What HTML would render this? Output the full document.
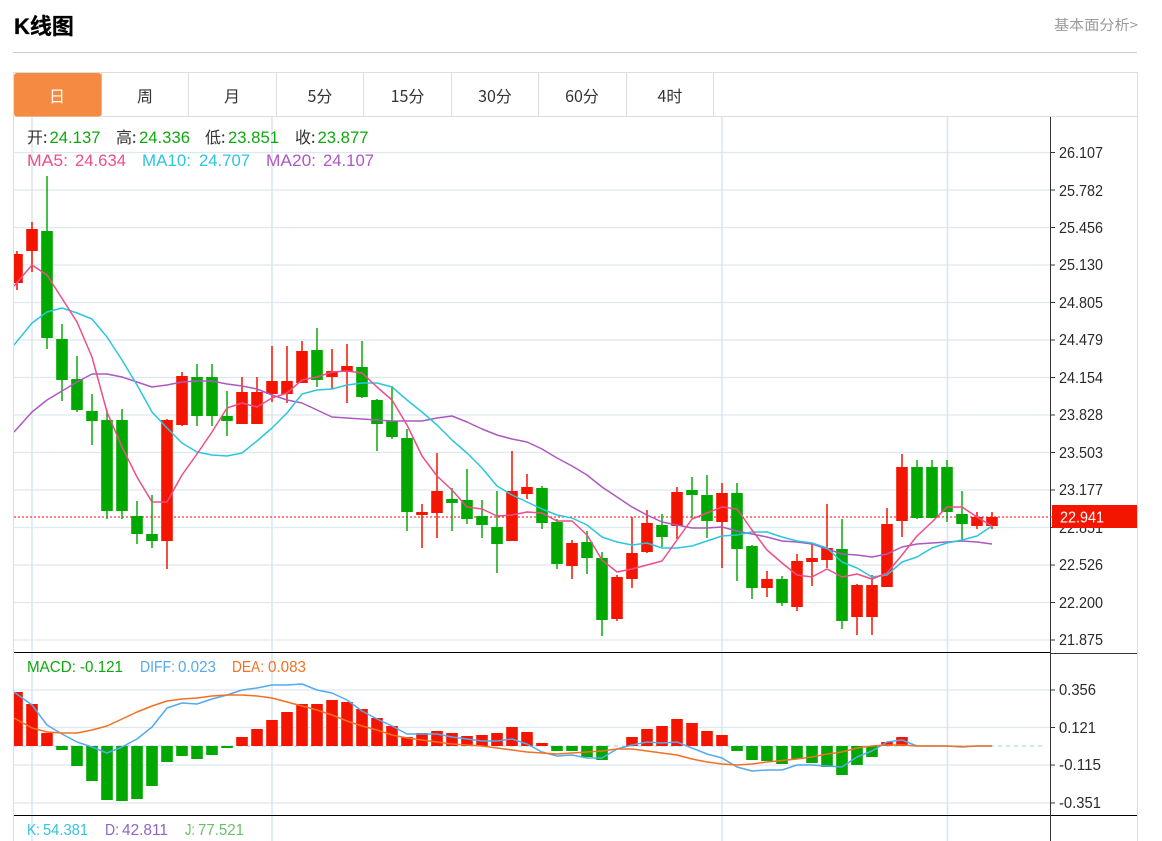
<!DOCTYPE html>
<html lang="zh-CN">
<head>
<meta charset="utf-8">
<title>K线图</title>
<style>
html,body{margin:0;padding:0;background:#fff;width:1162px;height:841px;overflow:hidden}
svg{display:block;position:absolute;left:0;top:0}
text{font-family:"Liberation Sans","Noto Sans CJK SC",sans-serif}
.n{font-size:16px;fill:#2a2a2a}
.t{font-size:16px;fill:#333;text-anchor:middle;font-family:"Noto Sans CJK SC","Liberation Sans",sans-serif}
.l{font-size:16px;fill:#333;font-family:"Noto Sans CJK SC","Liberation Sans",sans-serif}
.v{font-size:17px}
.s{font-size:16px}
</style>
</head>
<body>
<svg width="1162" height="841" viewBox="0 0 1162 841" xmlns="http://www.w3.org/2000/svg">
<defs><clipPath id="p"><rect x="14" y="117" width="1036" height="724"/></clipPath></defs>

<!-- header -->
<text x="14" y="34" font-size="22" font-weight="700" fill="#000" stroke="#000" stroke-width="0.3" style="font-family:'Liberation Sans','Noto Sans CJK SC',sans-serif">K线图</text>
<text x="1054" y="30" font-size="14" fill="#999" style="font-family:'Noto Sans CJK SC','Liberation Sans',sans-serif" textLength="84" lengthAdjust="spacingAndGlyphs">基本面分析&gt;</text>
<path d="M13 52.5H1137" stroke="#ccc" fill="none"/>

<!-- frame -->
<path d="M13.5 72.5H1137.5V841M13.5 72.5V841M14 116.5H1137" stroke="#ddd" fill="none"/>
<path d="M101.5 73V116M188.5 73V116M276.5 73V116M363.5 73V116M451.5 73V116M538.5 73V116M626.5 73V116M713.5 73V116" stroke="#ddd" fill="none"/>
<rect x="14" y="73" width="87.5" height="43.5" rx="3" fill="#f58b42"/>
<text class="t" x="57" y="102" style="fill:#fff">日</text>
<text class="t" x="145" y="102">周</text>
<text class="t" x="232" y="102">月</text>
<text class="t" x="320" y="102">5分</text>
<text class="t" x="407.500" y="102">15分</text>
<text class="t" x="495" y="102">30分</text>
<text class="t" x="582" y="102">60分</text>
<text class="t" x="670" y="102">4时</text>

<!-- grid -->
<path d="M14 152.500H1050M14 190H1050M14 227.500H1050M14 265H1050M14 302.500H1050M14 340H1050M14 377.500H1050M14 415H1050M14 452.500H1050M14 490H1050M14 527.500H1050M14 565H1050M14 602.500H1050M14 640H1050M14 690H1050M14 727.500H1050M14 765H1050M14 803H1050" stroke="#dde8ef" stroke-width="1.200" fill="none"/>
<path d="M32 117V841M272 117V841M722 117V841M947.500 117V841" stroke="#d8e5ee" stroke-width="1.500" fill="none"/>

<!-- current price line -->
<path d="M14 517H1050" stroke="#f00" stroke-width="1" stroke-dasharray="2 2" fill="none"/>
<!-- macd zero line -->
<path d="M14 746H1046" stroke="#8fd3f0" stroke-width="1" stroke-dasharray="4 4" fill="none"/>

<g clip-path="url(#p)" fill="none">
<!-- red wicks -->
<path stroke="#f41500" stroke-width="1.500" d="M17 251V290M32 222V272M167 419V569M182 372V426M242 377V424M257 377V424M272 346V402M287 346V403M302 341V383M332 349V389M347 344V403M422 504V548M437 453V538M512 451V541M527 474V499M572 540V579M617 575V621M632 517V588M647 510V553M677 487V539M722 483V568M767 571V597M797 554V611M812 544V586M827 504V568M857 584V635M872 575V635M887 508V587M902 454V537M977 512V529M992 512V529"/>
<!-- red bodies -->
<path stroke="#f41500" stroke-width="11.600" d="M17 254V283M32 229V251M167 420V541M182 376V425M242 392V424M257 392V424M272 381V394M287 381V394M302 351V383M332 371V377M347 366V372M422 512V515M437 491V513M512 491V541M527 487V494M572 543V566M617 577V619M632 553V579M647 523V552M677 492V526M722 493V522M767 579V588M797 561V607M812 558V562M827 548V560M857 585V617M872 585V617M887 524V587M902 467V521M977 517V526M992 517V526"/>
<!-- green wicks -->
<path stroke="#0da80d" stroke-width="1.500" d="M47 176V349M62 324V401M77 356V412M92 394V445M107 410V519M122 409V519M137 501V544M152 495V548M197 364V426M212 364V426M227 391V436M317 328V387M362 341V398M377 399V451M392 386V439M407 429V531M452 488V531M467 469V524M482 500V538M497 491V573M542 486V529M557 519V569M587 531V574M602 552V636M662 514V547M692 477V518M707 475V538M737 483V581M752 545V599M782 576V606M842 519V629M917 460V519M932 460V518M947 460V522M962 491V540"/>
<!-- green bodies -->
<path stroke="#00a800" stroke-width="11.600" d="M47 231V338M62 339V380M77 379V410M92 411V421M107 420V511M122 420V511M137 516V534M152 534V541M197 377V416M212 377V416M227 416V421M317 350V380M362 367V397M377 400V424M392 421V437M407 438V512M452 499V503M467 500V519M482 516V525M497 527V544M542 488V523M557 522V564M587 542V558M602 558V620M662 525V537M692 490V495M707 495V521M737 493V549M752 546V588M782 579V603M842 549V621M917 467V518M932 467V518M947 467V512M962 514V524"/>

<!-- MA lines -->
<polyline stroke="#ad58c1" stroke-width="1.500" stroke-linejoin="round" points="14,432 32,412 47,400 62,391 77,382 92,374 107,374 122,377 137,382 152,387 167,385 182,382 197,381 212,381 227,384 242,386 257,389 272,395 287,400 302,403 317,410 332,417 347,418 362,419 377,420 392,421 407,421 422,421 437,418 452,416 467,422 482,429 497,435 512,439 527,442 542,449 557,458 572,466 587,475 602,487 617,497 632,507 647,515 662,522 677,525 692,528 707,528 722,527 737,531 752,534 767,537 782,541 797,542 812,544 827,549 842,554 857,555 872,557 887,554 902,547 917,544 932,543 947,542 962,541 977,542 992,544"/>
<polyline stroke="#2cc6dc" stroke-width="1.500" stroke-linejoin="round" points="14,345 32,323 47,312 62,308 77,313 92,319 107,337 122,360 137,385 152,412 167,428 182,443 197,452 212,455 227,456 242,453 257,441 272,428 287,413 302,394 317,390 332,389 347,385 362,383 377,383 392,387 407,400 422,412 437,425 452,440 467,453 482,468 497,486 512,495 527,502 542,509 557,515 572,518 587,525 602,537 617,542 632,545 647,543 662,548 677,548 692,546 707,541 722,536 737,535 752,532 767,532 782,537 797,541 812,543 827,548 842,562 857,568 872,577 887,575 902,562 917,557 932,548 947,543 962,540 977,536 992,526"/>
<polyline stroke="#ee4d8a" stroke-width="1.500" stroke-linejoin="round" points="14,286 32,265 47,275 63,300 77,322 92,357 107,412 122,447 137,477 152,502 167,502 182,475 197,454 212,432 227,408 242,403 257,407 272,398 287,393 302,380 317,377 332,372 347,371 362,373 377,387 392,400 407,425 422,456 437,476 452,490 467,507 482,509 497,516 512,515 527,512 542,513 557,521 572,521 587,535 602,560 617,572 632,569 647,565 662,561 677,540 692,519 707,513 722,507 737,509 752,530 767,550 782,563 797,575 812,577 827,569 842,577 857,574 872,579 887,573 902,555 917,536 932,522 947,507 962,507 977,517 992,526"/>

<!-- MACD bars -->
<path stroke="#f41500" stroke-width="11.600" d="M17 692V746M32 704V746M47 733V746M242 737V746M257 729V746M272 720V746M287 712V746M302 704V746M317 704V746M332 700V746M347 702V746M362 709V746M377 718V746M392 726V746M407 737V746M422 733V746M437 731V746M452 733V746M467 736V746M482 735V746M497 733V746M512 727V746M527 732V746M542 743V746M632 737V746M647 729V746M662 726V746M677 719V746M692 723V746M707 731V746M722 735V746M887 742V746M902 737V746"/>
<path stroke="#00a800" stroke-width="11.600" d="M62 746V750M77 746V766M92 746V781M107 746V800M122 746V801M137 746V799M152 746V786M167 746V762M182 746V756M197 746V759M212 746V755M227 746V748M557 746V751M572 746V751M587 746V757M602 746V760M737 746V751M752 746V760M767 746V761M782 746V764M797 746V759M812 746V763M827 746V767M842 746V775M857 746V765M872 746V757"/>
<!-- DIFF -->
<polyline stroke="#55a9ee" stroke-width="1.500" stroke-linejoin="round" points="14,692 32,705 47,725 62,734 77,742 92,747 107,753 122,747 137,739 152,727 167,708 182,703 197,704 212,699 227,695 242,690 257,688 272,685 287,685 302,684 317,690 332,693 347,700 362,711 377,719 392,726 407,734 422,734 437,734 452,737 467,739 482,741 497,741 512,739 527,744 542,752 557,756 572,755 587,758 602,758 617,749 632,745 647,742 662,743 677,742 692,748 707,754 722,758 737,767 752,771 767,770 782,770 797,765 812,765 827,766 842,767 857,757 872,751 887,742 902,740 917,746 932,746 947,746 962,747 977,746 992,746"/>
<!-- DEA -->
<polyline stroke="#f37022" stroke-width="1.500" stroke-linejoin="round" points="14,718 32,728 47,732 62,733 77,733 92,730 107,726 122,719 137,712 152,706 167,701 182,699 197,698 212,696 227,695 242,695 257,696 272,698 287,702 302,706 317,710 332,715 347,721 362,726 377,730 392,735 407,738 422,740 437,742 452,744 467,745 482,746 497,748 512,750 527,752 542,753 557,754 572,753 587,752 602,751 617,749 632,749 647,751 662,753 677,755 692,759 707,762 722,764 737,765 752,764 767,762 782,760.500 797,759 812,757 827,754 842,752 857,748 872,746 887,745 902,745 917,746 932,746 947,746 962,746.500 977,746 992,746"/>
</g>

<!-- separators and axis -->
<path d="M14 652.500H1050M14 815.500H1137" stroke="#000" fill="none"/>
<path d="M1050 653.500H1137" stroke="#333" fill="none"/>
<path d="M1050.500 117V841" stroke="#333" fill="none"/>
<path d="M1050 152.500h5M1050 190h5M1050 227.500h5M1050 265h5M1050 302.500h5M1050 340h5M1050 377.500h5M1050 415h5M1050 452.500h5M1050 490h5M1050 527.500h5M1050 565h5M1050 602.500h5M1050 640h5M1050 690h5M1050 727.500h5M1050 765h5M1050 803h5" stroke="#333" fill="none"/>

<!-- axis labels -->
<g>
<text class="n" x="1059" y="158" textLength="44" lengthAdjust="spacingAndGlyphs">26.107</text>
<text class="n" x="1059" y="196" textLength="44" lengthAdjust="spacingAndGlyphs">25.782</text>
<text class="n" x="1059" y="233" textLength="44" lengthAdjust="spacingAndGlyphs">25.456</text>
<text class="n" x="1059" y="270" textLength="44" lengthAdjust="spacingAndGlyphs">25.130</text>
<text class="n" x="1059" y="308" textLength="44" lengthAdjust="spacingAndGlyphs">24.805</text>
<text class="n" x="1059" y="345" textLength="44" lengthAdjust="spacingAndGlyphs">24.479</text>
<text class="n" x="1059" y="383" textLength="44" lengthAdjust="spacingAndGlyphs">24.154</text>
<text class="n" x="1059" y="420" textLength="44" lengthAdjust="spacingAndGlyphs">23.828</text>
<text class="n" x="1059" y="458" textLength="44" lengthAdjust="spacingAndGlyphs">23.503</text>
<text class="n" x="1059" y="495" textLength="44" lengthAdjust="spacingAndGlyphs">23.177</text>
<text class="n" x="1059" y="533" textLength="44" lengthAdjust="spacingAndGlyphs">22.851</text>
<text class="n" x="1059" y="570" textLength="44" lengthAdjust="spacingAndGlyphs">22.526</text>
<text class="n" x="1059" y="608" textLength="44" lengthAdjust="spacingAndGlyphs">22.200</text>
<text class="n" x="1059" y="645" textLength="44" lengthAdjust="spacingAndGlyphs">21.875</text>
<text class="n" x="1059" y="695" textLength="37" lengthAdjust="spacingAndGlyphs">0.356</text>
<text class="n" x="1059" y="733" textLength="37" lengthAdjust="spacingAndGlyphs">0.121</text>
<text class="n" x="1059" y="770" textLength="42" lengthAdjust="spacingAndGlyphs">-0.115</text>
<text class="n" x="1059" y="808" textLength="42" lengthAdjust="spacingAndGlyphs">-0.351</text>
</g>

<!-- current price tag -->
<path d="M1050 517h5" stroke="#f41500"/>
<rect x="1052" y="505" width="85" height="23" fill="#f41500"/>
<text x="1060" y="522.500" font-size="16" fill="#fff" textLength="44" lengthAdjust="spacingAndGlyphs">22.941</text>

<!-- legend row 1 -->
<text class="l" x="27" y="143">开:</text>
<text class="v" x="49.500" y="143" fill="#0fa80f" textLength="51" lengthAdjust="spacingAndGlyphs">24.137</text>
<text class="l" x="116" y="143">高:</text>
<text class="v" x="139" y="143" fill="#0fa80f" textLength="51" lengthAdjust="spacingAndGlyphs">24.336</text>
<text class="l" x="205" y="143">低:</text>
<text class="v" x="228" y="143" fill="#0fa80f" textLength="51" lengthAdjust="spacingAndGlyphs">23.851</text>
<text class="l" x="295" y="143">收:</text>
<text class="v" x="317.500" y="143" fill="#0fa80f" textLength="51" lengthAdjust="spacingAndGlyphs">23.877</text>
<!-- legend row 2 -->
<text class="v" x="27" y="166" fill="#ee4d8a" textLength="41" lengthAdjust="spacingAndGlyphs">MA5:</text>
<text class="v" x="75" y="166" fill="#ee4d8a" textLength="51" lengthAdjust="spacingAndGlyphs">24.634</text>
<text class="v" x="142" y="166" fill="#2cc6dc" textLength="49" lengthAdjust="spacingAndGlyphs">MA10:</text>
<text class="v" x="199" y="166" fill="#2cc6dc" textLength="51" lengthAdjust="spacingAndGlyphs">24.707</text>
<text class="v" x="266" y="166" fill="#ad58c1" textLength="50" lengthAdjust="spacingAndGlyphs">MA20:</text>
<text class="v" x="323" y="166" fill="#ad58c1" textLength="51" lengthAdjust="spacingAndGlyphs">24.107</text>
<!-- MACD legend -->
<text class="s" x="27" y="672" fill="#0fa80f" textLength="49" lengthAdjust="spacingAndGlyphs">MACD:</text>
<text class="s" x="80" y="672" fill="#0fa80f" textLength="43" lengthAdjust="spacingAndGlyphs">-0.121</text>
<text class="s" x="140" y="672" fill="#55a9ee" textLength="35" lengthAdjust="spacingAndGlyphs">DIFF:</text>
<text class="s" x="178" y="672" fill="#55a9ee" textLength="38" lengthAdjust="spacingAndGlyphs">0.023</text>
<text class="s" x="232" y="672" fill="#f37022" textLength="32" lengthAdjust="spacingAndGlyphs">DEA:</text>
<text class="s" x="268" y="672" fill="#f37022" textLength="38" lengthAdjust="spacingAndGlyphs">0.083</text>
<!-- KDJ legend -->
<text class="s" x="27" y="835" fill="#33c5dd" textLength="13" lengthAdjust="spacingAndGlyphs">K:</text>
<text class="s" x="43" y="835" fill="#33c5dd" textLength="45" lengthAdjust="spacingAndGlyphs">54.381</text>
<text class="s" x="105" y="835" fill="#8e64c8" textLength="14" lengthAdjust="spacingAndGlyphs">D:</text>
<text class="s" x="122" y="835" fill="#8e64c8" textLength="46" lengthAdjust="spacingAndGlyphs">42.811</text>
<text class="s" x="185" y="835" fill="#6abf6a" textLength="10" lengthAdjust="spacingAndGlyphs">J:</text>
<text class="s" x="198" y="835" fill="#6abf6a" textLength="46" lengthAdjust="spacingAndGlyphs">77.521</text>
</svg>
</body>
</html>
